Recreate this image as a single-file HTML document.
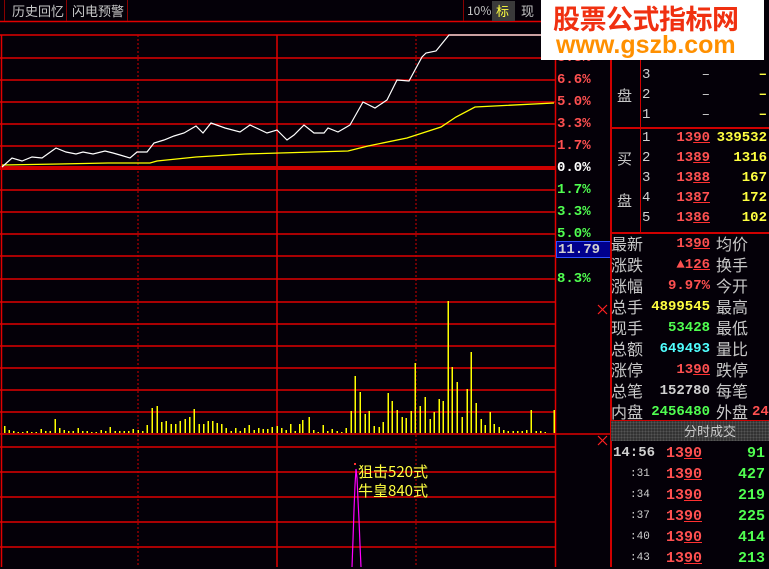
<!DOCTYPE html>
<html><head><meta charset="utf-8"><style>
*{margin:0;padding:0;box-sizing:border-box}
body{width:769px;height:567px;background:#040008;overflow:hidden;position:relative;font-family:"Liberation Sans","Noto Sans CJK SC",sans-serif}
.a{position:absolute;white-space:nowrap}
.cn{font-family:"Noto Sans CJK SC","WenQuanYi Zen Hei",sans-serif;color:#c8c8c8;font-size:15px;line-height:20px}
.n{font-family:"Liberation Mono","DejaVu Sans Mono",monospace;font-size:14px;line-height:20px;font-weight:bold;text-align:right}
.r{color:#ff5050}.y{color:#ffff40}.g{color:#50ff50}.c{color:#50ffff}.w{color:#d0d0d0}
u{text-decoration:underline;text-decoration-color:#ff3030}
.ax{font-family:"Liberation Mono",monospace;font-size:14px;font-weight:bold;line-height:16px}
</style></head><body>
<svg class="a" style="left:0;top:0" width="611" height="567">
<g stroke="#e00000" stroke-width="1.5">
<line x1="0" y1="21.5" x2="611" y2="21.5"/>
<line x1="0" y1="35" x2="555" y2="35"/>
<line x1="0" y1="58" x2="555" y2="58"/><line x1="0" y1="80" x2="555" y2="80"/><line x1="0" y1="102" x2="555" y2="102"/><line x1="0" y1="124" x2="555" y2="124"/><line x1="0" y1="146" x2="555" y2="146"/>
<line x1="0" y1="190" x2="555" y2="190"/><line x1="0" y1="212" x2="555" y2="212"/><line x1="0" y1="234" x2="555" y2="234"/><line x1="0" y1="256" x2="555" y2="256"/><line x1="0" y1="279" x2="555" y2="279"/>
<line x1="0" y1="302" x2="555" y2="302"/><line x1="0" y1="324" x2="555" y2="324"/><line x1="0" y1="346" x2="555" y2="346"/><line x1="0" y1="368" x2="555" y2="368"/><line x1="0" y1="390" x2="555" y2="390"/><line x1="0" y1="412" x2="555" y2="412"/>
<line x1="0" y1="434" x2="611" y2="434"/>
<line x1="0" y1="447" x2="555" y2="447"/><line x1="0" y1="472" x2="555" y2="472"/><line x1="0" y1="497" x2="555" y2="497"/><line x1="0" y1="522" x2="555" y2="522"/><line x1="0" y1="547" x2="555" y2="547"/>
<line x1="277" y1="35" x2="277" y2="567"/>
<line x1="555.5" y1="35" x2="555.5" y2="567"/>
<line x1="1.5" y1="35" x2="1.5" y2="567"/>
</g>
<g stroke="#d00000" stroke-width="1" stroke-dasharray="2,2">
<line x1="138" y1="35" x2="138" y2="567"/><line x1="416" y1="35" x2="416" y2="567"/>
</g>
<rect x="0" y="166" width="555" height="4" fill="#d00000"/>
<polyline fill="none" stroke="#ffff00" stroke-width="1.3" points="2,165 59,164 108,163 150,163 157,161 196,157 245,154 348,151 368,146 407,138 441,127 456,117 475,107 554,103"/>
<polyline fill="none" stroke="#ffffff" stroke-width="1.2" points="2,167 12,158 22,161 32,157 42,158 49,153 56,148 66,152 76,154 83,152 93,154 105,151 113,153 120,155 130,158 137,152 147,152 154,143 164,140 174,136 184,133 196,126 203,133 211,123 225,128 240,132 250,125 267,133 277,130 287,140 294,135 304,125 314,133 324,133 328,128 338,132 350,125 363,102 375,108 387,100 397,80 409,81 422,57 426,53 436,51 449,35 554,35"/>
<path stroke="#ffff00" stroke-width="1.5" shape-rendering="crispEdges" fill="none" d="M4.5 433v-7M9 433v-3M13.5 433v-2M18 433v-1M22.5 433v-1M27 433v-2M31.5 433v-1M36 433v-1M41 433v-4M45.5 433v-2M50 433v-2M55 433v-14M59.5 433v-5M64 433v-3M68.5 433v-2M73 433v-2M78 433v-5M82.5 433v-2M87 433v-2M91.5 433v-1M96 433v-1M101 433v-3M105.5 433v-2M110 433v-6M115 433v-2M119.5 433v-2M124 433v-2M128.5 433v-2M133 433v-4M138 433v-3M142.5 433v-2M147 433v-8M152 433v-25M157 433v-27M161.5 433v-11M166 433v-12M171 433v-9M175.5 433v-9M180 433v-12M185 433v-14M189.5 433v-16M194 433v-24M199 433v-9M203.5 433v-9M208 433v-12M212.5 433v-12M217 433v-10M221.5 433v-9M226 433v-5M231 433v-2M235.5 433v-5M240 433v-2M244.5 433v-5M249 433v-8M254 433v-3M258.5 433v-5M263 433v-4M267.5 433v-4M272 433v-6M277 433v-7M281.5 433v-5M286 433v-3M290.5 433v-9M295 433v-2M299.5 433v-9M302.5 433v-13M309 433v-16M313.5 433v-3M318 433v-1M323 433v-8M327.5 433v-2M332 433v-4M337 433v-2M341.5 433v-1M346 433v-5M351 433v-22M355 433v-57M360 433v-41M365 433v-19M369 433v-22M374 433v-7M379 433v-6M383 433v-11M388 433v-40M392 433v-32M397 433v-23M402 433v-16M406 433v-15M411 433v-22M415 433v-70M420 433v-27M425 433v-36M430 433v-14M434 433v-21M439 433v-34M443 433v-32M448 433v-132M452 433v-66M457 433v-51M462 433v-16M467 433v-44M471 433v-81M476 433v-30M481 433v-14M485 433v-8M490 433v-21M494 433v-9M499 433v-6M503.5 433v-3M508 433v-2M513 433v-2M517.5 433v-2M522 433v-2M526.5 433v-3M531 433v-23M536 433v-2M540.5 433v-2M545 433v-1M554 433v-23"/>
<polyline fill="none" stroke="#ff00ff" stroke-width="1.2" points="352,567 353,540 354,510 355,485 356,469 357,478 358,500 359,520 360,545 361,567"/>
<rect x="354" y="463" width="2" height="2" fill="#ff3030"/>
<g stroke="#ff2020" stroke-width="1.2"><path d="M598 305l9 9M607 305l-9 9M598 436l9 9M607 436l-9 9"/></g>
</svg>
<div class="a cn" style="left:358px;top:462px;color:#ffff40;font-size:15px;line-height:19px">狙击520式<br>牛皇840式</div>

<div class="a" style="left:4px;top:0;width:63px;height:21px;border-left:1px solid #800;border-right:1px solid #800"></div>
<div class="a cn" style="left:12px;top:1px;font-size:13px">历史回忆</div>
<div class="a" style="left:127px;top:0;height:21px;border-left:1px solid #800"></div>
<div class="a cn" style="left:72px;top:1px;font-size:13px">闪电预警</div>
<div class="a" style="left:463px;top:0;height:21px;border-left:1px solid #800"></div>
<div class="a cn" style="left:467px;top:1px;font-size:12px">10%</div>
<div class="a" style="left:492px;top:1px;width:23px;height:20px;background:#3a3a3a"></div>
<div class="a cn" style="left:496px;top:1px;font-size:13px;color:#ffff40">标</div>
<div class="a cn" style="left:521px;top:1px;font-size:13px">现</div>

<div class="a ax r" style="left:557px;top:50px">8.3%</div>
<div class="a ax r" style="left:557px;top:72px">6.6%</div>
<div class="a ax r" style="left:557px;top:94px">5.0%</div>
<div class="a ax r" style="left:557px;top:116px">3.3%</div>
<div class="a ax r" style="left:557px;top:138px">1.7%</div>
<div class="a ax" style="left:557px;top:160px;color:#fff">0.0%</div>
<div class="a ax g" style="left:557px;top:182px">1.7%</div>
<div class="a ax g" style="left:557px;top:204px">3.3%</div>
<div class="a ax g" style="left:557px;top:226px">5.0%</div>
<div class="a ax g" style="left:557px;top:271px">8.3%</div>
<div class="a ax" style="left:556px;top:241px;width:55px;height:17px;background:#00008c;border:1px solid #3050ff;color:#d0d0d0;padding-left:1px">11.79</div>

<div class="a" style="left:610px;top:22px;width:1.5px;height:545px;background:#d00000"></div>
<div class="a" style="left:640px;top:22px;width:1px;height:210px;background:#d00000"></div>
<div class="a" style="left:611px;top:127px;width:158px;height:1.5px;background:#d00000"></div>
<div class="a" style="left:611px;top:232px;width:158px;height:1.5px;background:#d00000"></div>
<div class="a" style="left:611px;top:420px;width:158px;height:1.5px;background:#d00000"></div>
<div class="a" style="left:611px;top:421px;width:158px;height:20px;background:#333 radial-gradient(#555 1px,transparent 1px) 0 0/3px 3px"></div>
<div class="a cn" style="left:684px;top:421px;font-size:13px">分时成交</div>

<div class="a cn" style="left:617px;top:86px">盘</div>
<div class="a cn" style="left:617px;top:149px">买</div>
<div class="a cn" style="left:617px;top:191px">盘</div>
<div class="a n w" style="left:642px;top:65px;font-weight:normal">3<br>2<br>1</div>
<div class="a n w" style="left:642px;top:128px;font-weight:normal">1<br>2<br>3<br>4<br>5</div>
<div class="a n w" style="left:690px;top:65px;width:20px;font-weight:normal">–<br>–<br>–</div>
<div class="a n y" style="left:745px;top:65px;width:22px">–<br>–<br>–</div>
<div class="a n r" style="left:660px;top:128px;width:50px">13<u>90</u><br>13<u>89</u><br>13<u>88</u><br>13<u>87</u><br>13<u>86</u></div>
<div class="a n y" style="left:710px;top:128px;width:57px">339532<br>1316<br>167<br>172<br>102</div>

<div class="a cn" style="left:611px;top:233px;line-height:21px;font-size:16px">最新<br>涨跌<br>涨幅<br>总手<br>现手<br>总额<br>涨停<br>总笔<br>内盘</div>
<div class="a cn" style="left:716px;top:233px;line-height:21px;font-size:16px">均价<br>换手<br>今开<br>最高<br>最低<br>量比<br>跌停<br>每笔<br>外盘</div>
<div class="a n" style="left:640px;top:234px;width:70px;line-height:21px">
<span class="r">13<u>90</u></span><br><span class="r">▲1<u>26</u></span><br><span class="r">9.97%</span><br><span class="y">4899545</span><br><span class="g">53428</span><br><span class="c">649493</span><br><span class="r">13<u>90</u></span><br><span class="w">152780</span><br><span class="g">2456480</span></div>
<div class="a n r" style="left:752px;top:402px">24</div>

<div class="a n w" style="left:613px;top:443px;line-height:21px">14:56</div>
<div class="a n w" style="left:630px;top:464px;line-height:21px;font-size:11px;font-weight:normal;text-align:left">:31<br>:34<br>:37<br>:40<br>:43</div>
<div class="a n r" style="left:660px;top:443px;width:42px;line-height:21px;font-size:15px">13<u>90</u><br>13<u>90</u><br>13<u>90</u><br>13<u>90</u><br>13<u>90</u><br>13<u>90</u></div>
<div class="a n g" style="left:720px;top:443px;width:45px;line-height:21px;font-size:15px">91<br>427<br>219<br>225<br>414<br>213</div>

<div class="a" style="left:541px;top:0;width:223px;height:60px;background:#fff"></div>
<div class="a" style="left:553px;top:1px;font-family:'Noto Sans CJK SC',sans-serif;font-weight:bold;font-size:27px;line-height:34px;color:#f03010;letter-spacing:-0.5px">股票公式指标网</div>
<div class="a" style="left:556px;top:32px;font-family:'Liberation Sans',sans-serif;font-weight:bold;font-size:25px;line-height:27px;color:#ff9000">www.gszb.com</div>
</body></html>
